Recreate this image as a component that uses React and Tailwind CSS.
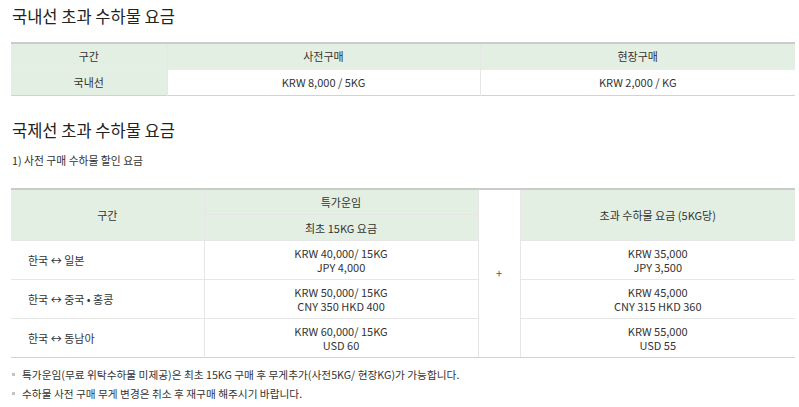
import React from "react";

const font = { fontFamily: '"Noto Sans CJK KR", "Noto Sans", sans-serif' };

const intlRows = [
    { route: "한국 ↔ 일본", special: ["KRW 40,000/ 15KG", "JPY 4,000"], extra: ["KRW 35,000", "JPY 3,500"] },
    { route: "한국 ↔ 중국 • 홍콩", special: ["KRW 50,000/ 15KG", "CNY 350 HKD 400"], extra: ["KRW 45,000", "CNY 315 HKD 360"] },
    { route: "한국 ↔ 동남아", special: ["KRW 60,000/ 15KG", "USD 60"], extra: ["KRW 55,000", "USD 55"] },
];

const notes = [
    "특가운임(무료 위탁수하물 미제공)은 최초 15KG 구매 후 무게추가(사전5KG/ 현장KG)가 가능합니다.",
    "수하물 사전 구매 무게 변경은 취소 후 재구매 해주시기 바랍니다.",
];

const App = () => {
    return (
        <div className="w-[799px] h-[407px] bg-white text-[#333] overflow-hidden pl-[11px] pr-[4px]" style={font}>
            <h2 className="text-[16.5px] leading-[20px] text-[#222] pt-[6px] pl-[1px]">국내선 초과 수하물 요금</h2>

            <table className="mt-[16px] w-[784px] table-fixed border-collapse text-[11px] text-center">
                <colgroup>
                    <col className="w-[156px]" />
                    <col className="w-[313px]" />
                    <col className="w-[315px]" />
                </colgroup>
                <tbody>
                    <tr className="h-[26px] bg-[#e4efe3] border-t-2 border-[#cbcbcb]">
                        <th className="font-normal">구간</th>
                        <th className="font-normal border-l border-[#e6e6e6]">사전구매</th>
                        <th className="font-normal border-l border-[#e6e6e6]">현장구매</th>
                    </tr>
                    <tr className="h-[26px] border-t border-[#e9ece9] border-b border-b-[#d2d2d2]">
                        <td className="bg-[#e4efe3]">국내선</td>
                        <td className="border-l border-[#e6e6e6]">KRW 8,000 / 5KG</td>
                        <td className="border-l border-[#e6e6e6]">KRW 2,000 / KG</td>
                    </tr>
                </tbody>
            </table>

            <h2 className="mt-[24px] text-[16.5px] leading-[20px] text-[#222] pl-[1px]">국제선 초과 수하물 요금</h2>
            <p className="mt-[13px] text-[10.8px] leading-[14px] pl-[1px]">1) 사전 구매 수하물 할인 요금</p>

            <table className="mt-[21px] w-[784px] table-fixed border-collapse text-[11px] leading-[14px] text-center">
                <colgroup>
                    <col className="w-[193px]" />
                    <col className="w-[274px]" />
                    <col className="w-[42px]" />
                    <col className="w-[275px]" />
                </colgroup>
                <tbody>
                    <tr className="h-[26px] border-t-2 border-[#cbcbcb]">
                        <th rowSpan={2} className="font-normal bg-[#e4efe3]">구간</th>
                        <th className="font-normal bg-[#e4efe3] border-l border-[#e6e6e6]">특가운임</th>
                        <th rowSpan={5} className="font-normal text-[#555] bg-white border-x border-[#e6e6e6] border-b border-b-[#d2d2d2]">+</th>
                        <th rowSpan={2} className="font-normal bg-[#e4efe3]">초과 수하물 요금 (5KG당)</th>
                    </tr>
                    <tr className="h-[26px]">
                        <th className="font-normal bg-[#e4efe3] border-l border-t border-[#e6e6e6]">최초 15KG 요금</th>
                    </tr>
                    {intlRows.map((r, i) => (
                        <tr
                            key={r.route}
                            className={`h-[39px] ${i === intlRows.length - 1 ? "border-b border-b-[#d2d2d2]" : ""}`}
                        >
                            <td className="text-left pl-[17px] border-t border-[#e6e6e6]">{r.route}</td>
                            <td className="border-l border-t border-[#e6e6e6]">
                                <div>{r.special[0]}</div>
                                <div>{r.special[1]}</div>
                            </td>
                            <td className="border-t border-[#e6e6e6]">
                                <div>{r.extra[0]}</div>
                                <div>{r.extra[1]}</div>
                            </td>
                        </tr>
                    ))}
                </tbody>
            </table>

            <ul className="mt-[7px] text-[10.7px] leading-[19px]">
                {notes.map((n) => (
                    <li key={n} className="flex items-center gap-[7px] pl-[1px]">
                        <span className="w-[3px] h-[3px] bg-[#c4c4c4] shrink-0" />
                        {n}
                    </li>
                ))}
            </ul>
        </div>
    );
};

export default App;
